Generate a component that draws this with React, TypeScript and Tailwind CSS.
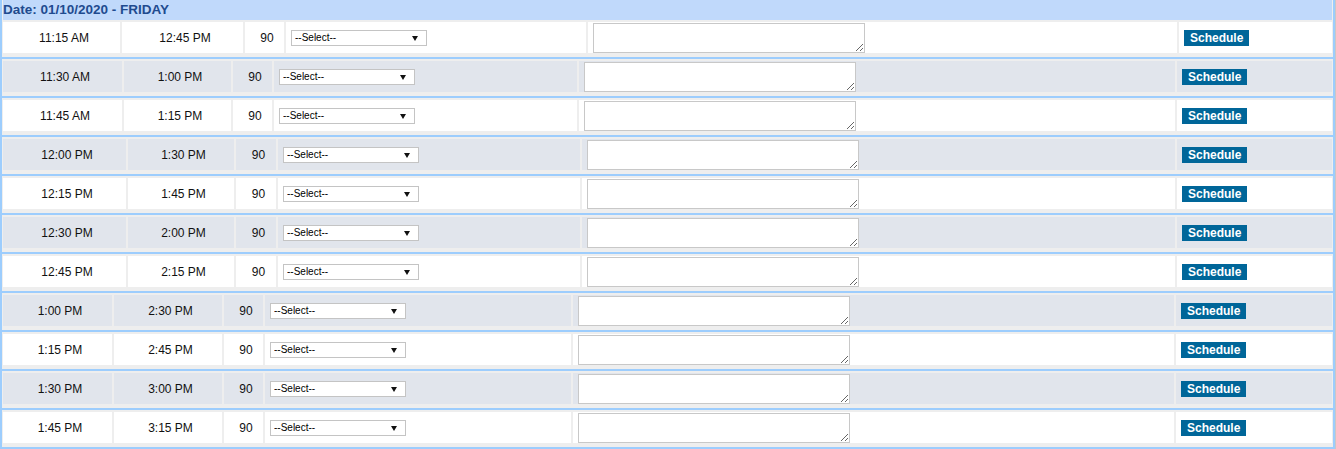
import React from 'react';

// column widths per table layout (each row is its own auto-width table in the original)
const LAYOUTS: Record<string, string[]> = {
  A: ['w-[117px]', 'w-[121px]', 'w-[39px]', 'w-[300px]', 'w-[589px]'],
  B: ['w-[119px]', 'w-[107px]', 'w-[39px]', 'w-[303px]', 'w-[596px]'],
  C: ['w-[123px]', 'w-[106px]', 'w-[40px]', 'w-[302px]', 'w-[593px]'],
  D: ['w-[109px]', 'w-[108px]', 'w-[39px]', 'w-[306px]', 'w-[601px]'],
};

const SLOTS = [
  { start: '11:15 AM', end: '12:45 PM', layout: 'A' },
  { start: '11:30 AM', end: '1:00 PM', layout: 'B' },
  { start: '11:45 AM', end: '1:15 PM', layout: 'B' },
  { start: '12:00 PM', end: '1:30 PM', layout: 'C' },
  { start: '12:15 PM', end: '1:45 PM', layout: 'C' },
  { start: '12:30 PM', end: '2:00 PM', layout: 'C' },
  { start: '12:45 PM', end: '2:15 PM', layout: 'C' },
  { start: '1:00 PM', end: '2:30 PM', layout: 'D' },
  { start: '1:15 PM', end: '2:45 PM', layout: 'D' },
  { start: '1:30 PM', end: '3:00 PM', layout: 'D' },
  { start: '1:45 PM', end: '3:15 PM', layout: 'D' },
];

const SelectBox: React.FC = () => (
  <div className="relative w-[136px] h-[16px] mt-[1px]">
    <select className="appearance-none block w-full h-full border border-[#c4c4c4] bg-white text-[10px] leading-[14px] pl-[3px] text-black outline-none">
      <option>--Select--</option>
    </select>
    <svg
      className="absolute right-[9px] top-[6px] pointer-events-none"
      width="6"
      height="5"
      viewBox="0 0 6 5"
    >
      <polygon points="0,0 6,0 3,5" fill="#111" />
    </svg>
  </div>
);

const SlotRow: React.FC<{ start: string; end: string; layout: string; shaded: boolean }> = ({
  start,
  end,
  layout,
  shaded,
}) => {
  const w = LAYOUTS[layout];
  const cell = `h-[31px] flex items-center pl-[5px] ${shaded ? 'bg-[#e1e5ec]' : 'bg-white'}`;
  return (
    <div className="flex gap-[2px] px-[1px] pt-[2px] pb-[4px] bg-[#eeeeee] border-b-2 border-[#9dcdfd]">
      <div className={`${cell} ${w[0]} justify-center`}>{start}</div>
      <div className={`${cell} ${w[1]} justify-center`}>{end}</div>
      <div className={`${cell} ${w[2]} justify-center`}>90</div>
      <div className={`${cell} ${w[3]}`}>
        <SelectBox />
      </div>
      <div className={`${cell} ${w[4]}`}>
        <textarea className="block w-[272px] h-[30px] mt-[1px] border border-[#c8c8c8] bg-white outline-none" />
      </div>
      <div className={`${cell} flex-1`}>
        <button className="h-[16px] px-[6px] bg-[#006699] text-white font-bold text-[12px] leading-[16px]">
          Schedule
        </button>
      </div>
    </div>
  );
};

export default function App() {
  return (
    <div className="flex font-['Liberation_Sans',Arial,sans-serif] text-[12px] text-[#111]">
      <div className="w-[1335px] border-x-2 border-[#9dcdfd] bg-[#eeeeee]">
        {/* date header */}
        <div className="px-[1px]">
          <div className="h-[20px] bg-[#c0d9fb] flex items-center text-[13.5px] font-bold text-[#1f4b8f]">
            Date: 01/10/2020 - FRIDAY
          </div>
        </div>
        {SLOTS.map((s, i) => (
          <SlotRow key={i} start={s.start} end={s.end} layout={s.layout} shaded={i % 2 === 1} />
        ))}
      </div>
      <div className="w-[1px] bg-[#c8c8c8]" />
    </div>
  );
}
